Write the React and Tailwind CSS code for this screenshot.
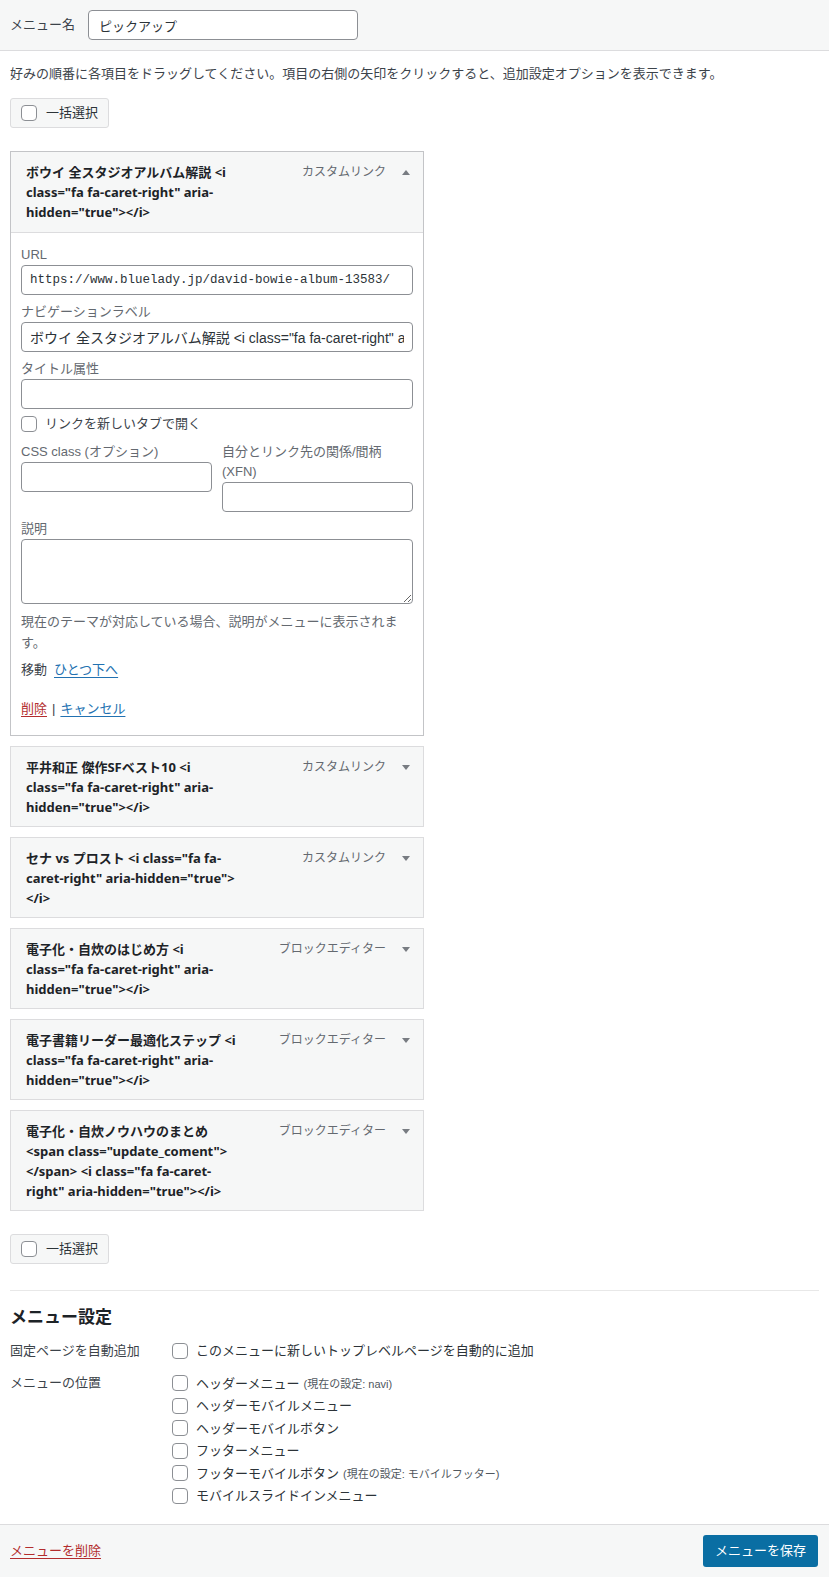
import React from "react";

const FONT = { fontFamily: '"Liberation Sans", "Noto Sans CJK JP", sans-serif' };
const TITLE_FONT = { fontFamily: '"Noto Sans", "Noto Sans CJK JP", sans-serif' };

const ITEMS = [
  { title: '平井和正 傑作SFベスト10 <i class="fa fa-caret-right" aria-hidden="true"></i>', type: "カスタムリンク" },
  { title: 'セナ vs プロスト <i class="fa fa-caret-right" aria-hidden="true"></i>', type: "カスタムリンク" },
  { title: '電子化・自炊のはじめ方 <i class="fa fa-caret-right" aria-hidden="true"></i>', type: "ブロックエディター" },
  { title: '電子書籍リーダー最適化ステップ <i class="fa fa-caret-right" aria-hidden="true"></i>', type: "ブロックエディター" },
  { title: '電子化・自炊ノウハウのまとめ <span class="update_coment"></span> <i class="fa fa-caret-right" aria-hidden="true"></i>', type: "ブロックエディター" },
];

const LOCATIONS = [
  { label: "ヘッダーメニュー", note: "(現在の設定: navi)" },
  { label: "ヘッダーモバイルメニュー" },
  { label: "ヘッダーモバイルボタン" },
  { label: "フッターメニュー" },
  { label: "フッターモバイルボタン", note: "(現在の設定: モバイルフッター)" },
  { label: "モバイルスライドインメニュー" },
];

function Box() {
  return <span className="w-4 h-4 shrink-0 rounded-[4px] border border-[#8c8f94] bg-white" />;
}

function Arrow({ up }) {
  return (
    <svg width="8" height="5" viewBox="0 0 8 5" className="shrink-0">
      <polygon points={up ? "0,5 8,5 4,0" : "0,0 8,0 4,5"} fill="#787c82" />
    </svg>
  );
}

function ItemHead({ title, type, up, cls }) {
  return (
    <div className={"flex items-start bg-[#f6f7f7] pl-[15px] pr-[13px] " + cls}>
      <div className="w-[218px] text-[13px] leading-[20px] font-bold text-[#1d2327]" style={TITLE_FONT}>
        {title}
      </div>
      <div className="ml-auto flex items-center gap-[16px] h-[20px]">
        <span className="text-[12px] text-[#646970]">{type}</span>
        <Arrow up={up} />
      </div>
    </div>
  );
}

function BulkButton() {
  return (
    <div className="inline-flex items-center gap-[9px] h-[30px] pl-[10px] pr-[10px] rounded-[3px] border border-[#dcdcde] bg-[#f6f7f7] text-[13px] text-[#2c3338]">
      <Box />
      <span>一括選択</span>
    </div>
  );
}

const inputCls = "block w-full h-[30px] rounded-[4px] border border-[#8c8f94] bg-white px-[8px] text-[14px] text-[#2c3338] outline-none";

export default function App() {
  return (
    <div className="w-[829px] min-h-[1577px] bg-white" style={FONT}>
      <div className="flex items-center h-[51px] px-[10px] bg-[#f6f7f7] border-b border-[#dcdcde]">
        <span className="text-[13px] text-[#3c434a]">メニュー名</span>
        <input
          readOnly
          value="ピックアップ"
          className="ml-[13px] w-[270px] h-[30px] rounded-[4px] border border-[#8c8f94] bg-white pl-[10px] text-[13px] text-[#2c3338] outline-none"
          style={FONT}
        />
      </div>

      <div className="px-[10px]">
        <p className="mt-[13px] text-[13px] leading-[20px] text-[#3c434a]">
          好みの順番に各項目をドラッグしてください。項目の右側の矢印をクリックすると、追加設定オプションを表示できます。
        </p>
        <div className="mt-[14px]">
          <BulkButton />
        </div>

        <div className="mt-[23px] w-[414px] flex flex-col gap-[10px]">
          <div className="border border-[#c3c4c7]">
            <ItemHead
              title='ボウイ 全スタジオアルバム解説 <i class="fa fa-caret-right" aria-hidden="true"></i>'
              type="カスタムリンク"
              up
              cls="pt-[10px] pb-[10px] border-b border-[#dcdcde]"
            />
            <div className="px-[10px] pt-[12px] pb-[16px] text-[13px] leading-[20px] text-[#646970]">
              <div>URL</div>
              <input
                readOnly
                value="https://www.bluelady.jp/david-bowie-album-13583/"
                className={inputCls + " !text-[12.5px]"}
                style={{ fontFamily: '"Liberation Mono", monospace' }}
              />
              <div className="mt-[7px]">ナビゲーションラベル</div>
              <input
                readOnly
                value='ボウイ 全スタジオアルバム解説 <i class="fa fa-caret-right" aria-hidden="true"></i>'
                className={inputCls}
                style={FONT}
              />
              <div className="mt-[7px]">タイトル属性</div>
              <input readOnly value="" className={inputCls} />
              <div className="mt-[5px] flex items-center gap-[8px] text-[#3c434a]">
                <Box />
                <span>リンクを新しいタブで開く</span>
              </div>
              <div className="mt-[8px] grid grid-cols-2 gap-[10px]">
                <div>
                  <div>CSS class (オプション)</div>
                  <input readOnly value="" className={inputCls} />
                </div>
                <div>
                  <div>自分とリンク先の関係/間柄 (XFN)</div>
                  <input readOnly value="" className={inputCls} />
                </div>
              </div>
              <div className="mt-[7px]">説明</div>
              <textarea
                readOnly
                className="block w-full h-[65px] rounded-[4px] border border-[#8c8f94] bg-white px-[8px] outline-none"
              />
              <p className="mt-[7px] leading-[21px]">
                現在のテーマが対応している場合、説明がメニューに表示されます。
              </p>
              <div className="mt-[7px] text-[#3c434a]">
                移動
                <span className="ml-[7px] text-[#2271b1] underline underline-offset-[3px]">ひとつ下へ</span>
              </div>
              <div className="mt-[19px] text-[#3c434a]">
                <span className="text-[#b32d2e] underline underline-offset-[3px]">削除</span>
                <span className="mx-[5px]">|</span>
                <span className="text-[#2271b1] underline underline-offset-[3px]">キャンセル</span>
              </div>
            </div>
          </div>

          {ITEMS.map((it, i) => (
            <ItemHead
              key={i}
              title={it.title}
              type={it.type}
              cls="pt-[10px] pb-[9px] border border-[#dcdcde]"
            />
          ))}
        </div>

        <div className="mt-[23px]">
          <BulkButton />
        </div>

        <div className="mt-[26px] border-t border-[#e8e8e8]" />

        <h3 className="mt-[15px] text-[17px] leading-[24px] font-bold text-[#1d2327]">メニュー設定</h3>

        <div className="mt-[10px] flex text-[13px] text-[#3c434a]">
          <div className="w-[162px] h-[22px] leading-[22px] text-[#3c434a]">固定ページを自動追加</div>
          <div className="flex items-center gap-[8px] h-[22px]">
            <Box />
            <span className="text-[#2c3338]">このメニューに新しいトップレベルページを自動的に追加</span>
          </div>
        </div>

        <div className="mt-[10px] flex text-[13px] text-[#3c434a] pb-[17px]">
          <div className="w-[162px] h-[22px] leading-[22px]">メニューの位置</div>
          <div className="flex flex-col">
            {LOCATIONS.map((l, i) => (
              <div key={i} className="flex items-center gap-[8px] h-[22.5px]">
                <Box />
                <span className="text-[#2c3338]">
                  {l.label}
                  {l.note && <span className="ml-[4px] text-[11px] text-[#50575e]">{l.note}</span>}
                </span>
              </div>
            ))}
          </div>
        </div>
      </div>

      <div className="flex items-center justify-between h-[53px] px-[10px] pr-[11px] bg-[#f6f7f7] border-t border-[#dcdcde]">
        <span className="text-[13px] text-[#b32d2e] underline underline-offset-[3px]">メニューを削除</span>
        <div className="h-[32px] px-[12px] flex items-center rounded-[3px] bg-[#0a6ea3] text-white text-[13px]">
          メニューを保存
        </div>
      </div>
    </div>
  );
}
